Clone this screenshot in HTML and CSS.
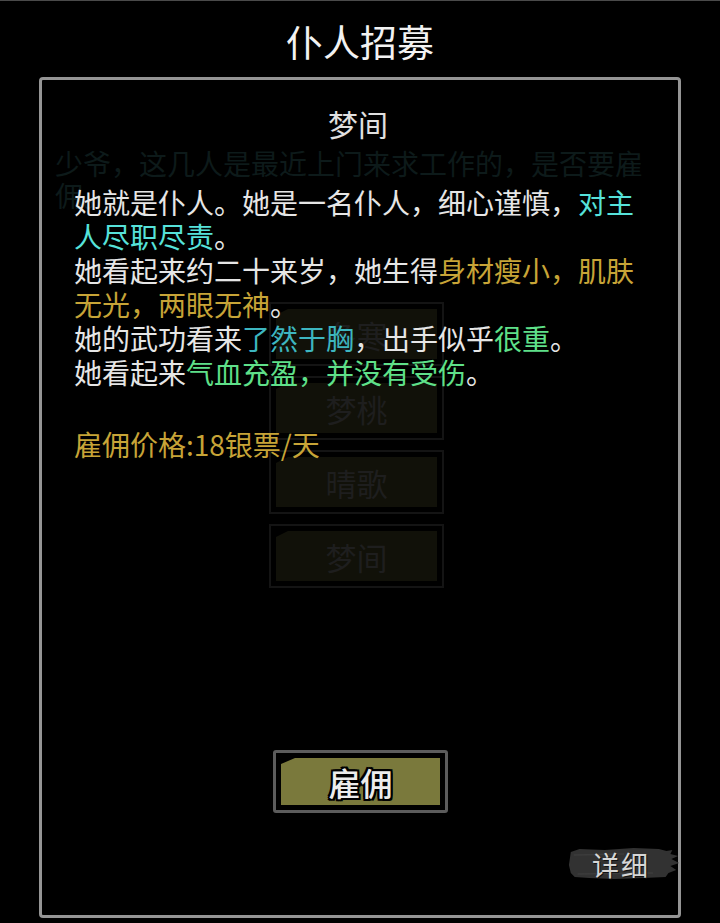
FILE: index.html
```html
<!DOCTYPE html>
<html lang="zh">
<head>
  <meta charset="UTF-8">
  <meta name="viewport" content="width=device-width, initial-scale=1.0">
  <title>仆人招募</title>
  <link rel="stylesheet" href="styles.css">
</head>
<body>
  <header class="top-bar">
    <h1 class="page-title">仆人招募</h1>
  </header>

  <section class="panel">
    <!-- list behind the popup, dimmed -->
    <div class="recruit-list">
      <p class="intro">少爷，这几人是最近上门来求工作的，是否要雇佣。</p>
      <ul class="candidates">
        <li class="candidate"><span>冬寒</span></li>
        <li class="candidate"><span>梦桃</span></li>
        <li class="candidate"><span>晴歌</span></li>
        <li class="candidate"><span>梦间</span></li>
      </ul>
    </div>

    <!-- detail popup for the selected servant -->
    <div class="info-popup">
      <h2 class="info-name">梦间</h2>
      <p class="info-text">她就是仆人。她是一名仆人，细心谨慎，<span class="c-cyan">对主人尽职尽责</span>。<br>
        她看起来约二十来岁，她生得<span class="c-gold">身材瘦小，肌肤无光，两眼无神</span>。<br>
        她的武功看来<span class="c-teal">了然于胸</span>，出手似乎<span class="c-green">很重</span>。<br>
        她看起来<span class="c-green">气血充盈，并没有受伤</span>。</p>
      <p class="info-price">雇佣价格:18银票/天</p>
    </div>

    <div class="actions">
      <button class="hire-button"><span>雇佣</span></button>
    </div>
    <div class="detail-row">
      <button class="detail-button">
        <svg class="brush" viewBox="0 0 120 42" preserveAspectRatio="none">
          <path d="M5 9 L14 6 L40 7 L70 5 L96 6 L104 8 L110 7 L108 11 L116 13 L109 16 L117 20 L108 23 L114 27 L106 30 L103 34 L80 35 L50 36 L24 35 L9 34 L5 30 L3 22 Z" fill="#323232"/>
          <path d="M8 12 L60 11 M12 31 L90 30" stroke="#3c3c3c" stroke-width="1.5"/>
        </svg>
        <span class="detail-label">详细</span>
      </button>
    </div>
  </section>
</body>
</html>
```

FILE: styles.css
```css
* {
  box-sizing: border-box;
  margin: 0;
  padding: 0;
}

body {
  background: #000;
  font-family: "Noto Sans CJK SC", "Noto Sans", sans-serif;
  height: 923px;
  overflow: hidden;
  border-top: 1px solid #4a4a4a;
}

.top-bar {
  height: 76px;
  display: flex;
  justify-content: center;
  align-items: center;
}

.page-title {
  color: #f2f2f2;
  font-size: 37px;
  font-weight: 400;
  line-height: 1;
  padding-top: 4px;
}

.panel {
  position: relative;
  margin: 0 39px;
  height: 841px;
  border: 3px solid #959595;
  border-radius: 4px;
  display: flex;
  flex-direction: column;
}

/* dimmed list behind popup */
.recruit-list {
  padding: 67px 20px 0 13px;
  height: 670px;
}

.intro {
  color: #0d1a1a;
  font-size: 28px;
  line-height: 32px;
}

.candidates {
  list-style: none;
  display: flex;
  flex-direction: column;
  align-items: center;
  gap: 10px;
  margin-top: 91px;
}

.candidate {
  width: 175px;
  height: 64px;
  border: 2px solid #141414;
  padding: 5px;
}

.candidate span {
  display: flex;
  justify-content: center;
  align-items: center;
  height: 100%;
  background: #111109;
  clip-path: polygon(12px 0, 100% 0, 100% 100%, 0 100%, 0 6px);
  color: #1e1e1e;
  font-size: 31px;
}

/* popup */
.info-popup {
  position: absolute;
  top: 0;
  left: 0;
  right: 0;
  padding: 23px 36px 0 32px;
}

.info-name {
  color: #e0e0e0;
  font-size: 30px;
  font-weight: 400;
  line-height: 40px;
  text-align: center;
}

.info-text {
  margin-top: 42px;
  color: #e6e6e6;
  font-size: 28px;
  line-height: 34px;
}

.info-price {
  margin-top: 38px;
  color: #c7a437;
  font-size: 28px;
  line-height: 34px;
}

.c-cyan { color: #56e2da; }
.c-gold { color: #c7a437; }
.c-teal { color: #3db6c0; }
.c-green { color: #5fe089; }

/* bottom buttons */
.actions {
  display: flex;
  justify-content: center;
  padding-left: 1px;
}

.hire-button {
  width: 175px;
  height: 63px;
  background: #000;
  border: 3px solid #5c5c5c;
  border-radius: 3px;
  padding: 5px;
  cursor: pointer;
}

.hire-button span {
  display: flex;
  justify-content: center;
  align-items: center;
  height: 100%;
  background: #7a793c;
  clip-path: polygon(14px 0, 100% 0, 100% 100%, 0 100%, 0 6px);
  color: #ececec;
  font-family: "Noto Sans CJK SC", sans-serif;
  font-size: 32px;
  font-weight: 500;
  text-shadow: -2px 0 #000, 2px 0 #000, 0 -2px #000, 0 2px #000,
    -2px -2px #000, 2px 2px #000, -2px 2px #000, 2px -2px #000;
}

.detail-row {
  display: flex;
  justify-content: flex-end;
  margin-top: 30px;
  margin-right: -4px;
}

.detail-button {
  position: relative;
  width: 116px;
  height: 42px;
  background: none;
  border: none;
  display: flex;
  align-items: center;
  padding-left: 26px;
}

.brush {
  position: absolute;
  inset: 0;
  width: 100%;
  height: 100%;
}

.detail-label {
  position: relative;
  color: #d6d6d6;
  font-size: 27px;
  letter-spacing: 2px;
  font-family: "Noto Sans CJK SC", serif;
  text-shadow: 1px 1px 0 #111;
}
```
